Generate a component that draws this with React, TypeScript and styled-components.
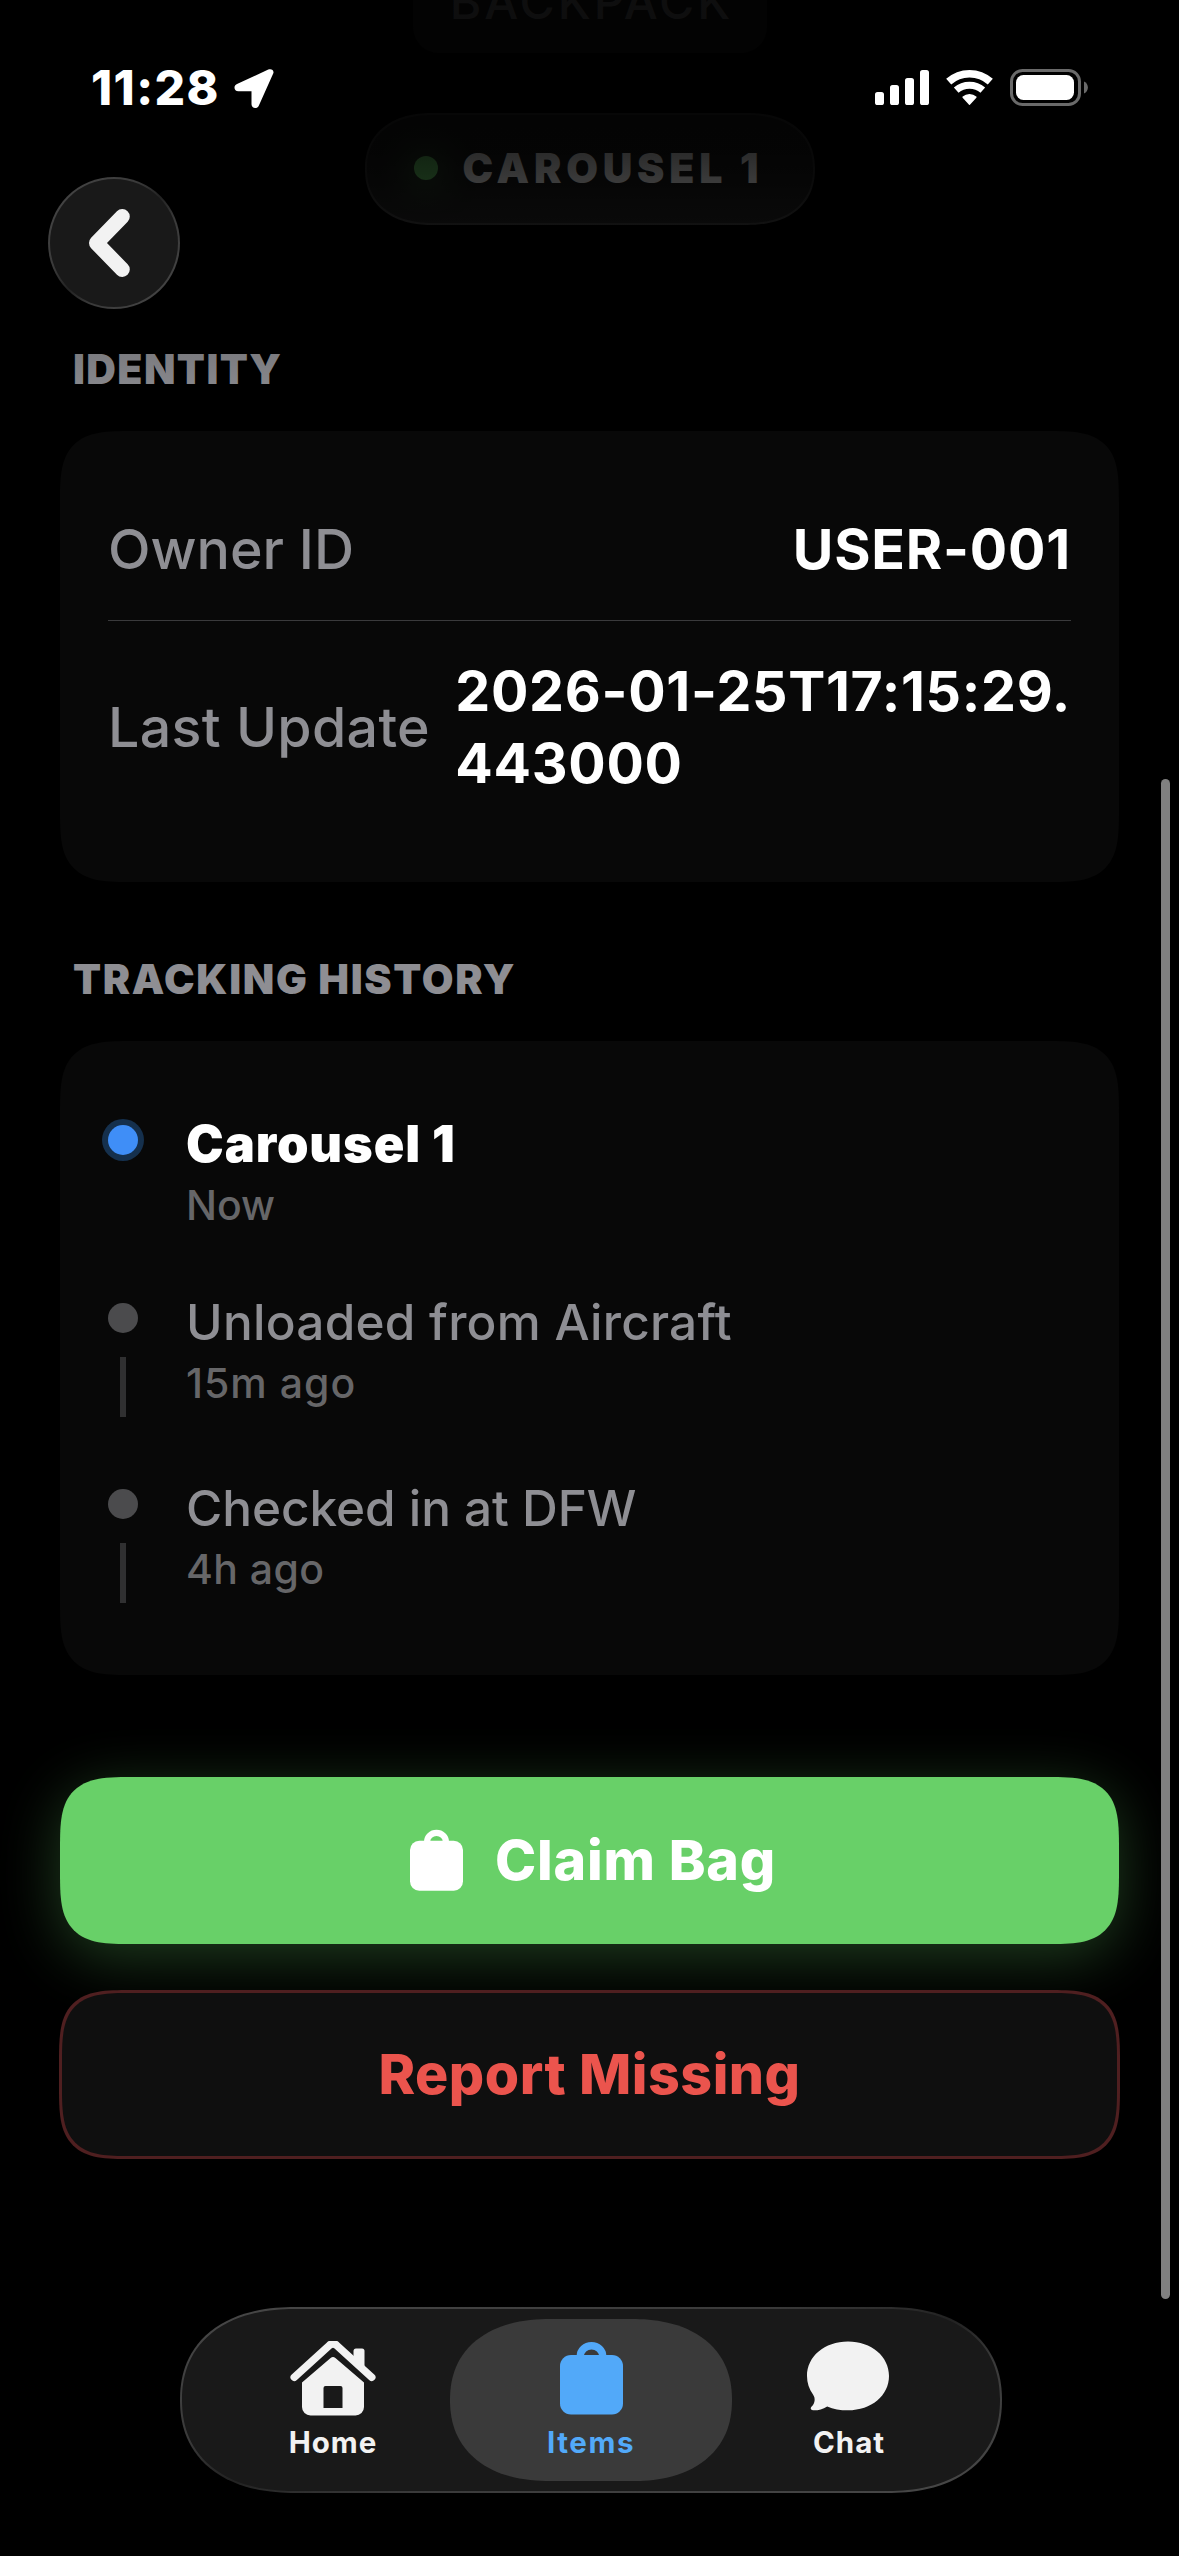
import React from "react";
import styled, { createGlobalStyle, css } from "styled-components";

const GlobalStyle = createGlobalStyle`
  *, *::before, *::after { box-sizing: border-box; }
  html, body { margin: 0; background: #000; }
  body { font-family: Inter, Roboto, "Liberation Sans", sans-serif; }
  button { font: inherit; color: inherit; }
`;

const smoothCorners = css`
  border-radius: 50px;
  @supports (corner-shape: superellipse(1.7)) {
    border-radius: 72px;
    corner-shape: superellipse(1.7);
  }
`;

const smoothPill = (rx: number, ry: number) => css`
  border-radius: ${ry}px;
  @supports (corner-shape: superellipse(1.18)) {
    border-radius: ${rx}px / ${ry}px;
    corner-shape: superellipse(1.18);
  }
`;

const Screen = styled.div`
  position: relative;
  width: 1179px;
  height: 2556px;
  overflow: hidden;
  background: #000;
`;

const ScrollContent = styled.main`
  display: flex;
  flex-direction: column;
  margin-top: -47px;
  padding: 0 60px;
`;

const TypeChip = styled.div`
  align-self: center;
  width: 354px;
  height: 100px;
  padding-left: 4px;
  border-radius: 26px;
  background: #1a1a1a;
  color: #8e8e93;
  font-size: 48px;
  font-weight: 500;
  line-height: 98px;
  text-align: center;
  letter-spacing: 3px;
`;

const LocationPill = styled.div`
  align-self: center;
  display: flex;
  align-items: center;
  gap: 25px;
  width: 450px;
  height: 112px;
  margin-top: 60px;
  padding: 0 0 2px 47px;
  background: #1a1a1a;
  border: 2px solid #2e2e2e;
  color: #fff;
  font-size: 41px;
  font-weight: 900;
  letter-spacing: 4.8px;
  white-space: nowrap;
  ${smoothPill(68, 56)}
`;

const LiveDot = styled.span`
  width: 24px;
  height: 24px;
  border-radius: 50%;
  background: #69d069;
  box-shadow: 0 0 36px rgba(105, 208, 105, 0.8);
`;

const SectionTitle = styled.h2<{ $gap: number; $spacing: number }>`
  margin: ${(p) => p.$gap}px 0 38px 13px;
  color: #8e8e93;
  font-size: 41px;
  font-weight: 900;
  line-height: 48px;
  letter-spacing: ${(p) => p.$spacing}px;
`;

const Card = styled.section`
  background: #080808;
  ${smoothCorners}
`;

const IdentityCard = styled(Card)`
  height: 451px;
  padding: 48px;
`;

const InfoRow = styled.div<{ $height: number; $divided?: boolean }>`
  display: flex;
  align-items: center;
  justify-content: space-between;
  height: ${(p) => p.$height}px;
  padding-bottom: 2px;
  border-bottom: ${(p) => (p.$divided ? "1px solid #3a3a3c" : "0")};
`;

const InfoLabel = styled.span<{ $spacing: number }>`
  color: #8e8e93;
  font-size: 55.5px;
  font-weight: 500;
  line-height: 72px;
  white-space: nowrap;
  letter-spacing: ${(p) => p.$spacing}px;
`;

const InfoValue = styled.span<{ $spacing: number }>`
  color: #fff;
  font-size: 55.5px;
  font-weight: 700;
  line-height: 72px;
  white-space: pre;
  letter-spacing: ${(p) => p.$spacing}px;
`;

const HistoryCard = styled(Card)`
  height: 634px;
  padding: 73px 48px 0;
`;

const Step = styled.div`
  display: flex;
  gap: 48px;
  padding-bottom: 61px;
`;

const Marker = styled.div`
  display: flex;
  flex-direction: column;
  align-items: center;
  gap: 24px;
  width: 30px;
  padding-top: 11px;
`;

const StepDot = styled.span<{ $active?: boolean }>`
  width: 30px;
  height: 30px;
  border-radius: 50%;
  background: ${(p) => (p.$active ? "#3f8ef7" : "#4b4b4d")};
  box-shadow: ${(p) => (p.$active ? "0 0 0 6px #15304d" : "none")};
`;

const StepLine = styled.span`
  width: 6px;
  height: 60px;
  background: #303031;
`;

const StepText = styled.div`
  display: flex;
  flex-direction: column;
  gap: 6px;
  height: 117px;
  white-space: nowrap;
`;

const StepTitle = styled.span<{ $active?: boolean; $spacing: number }>`
  color: ${(p) => (p.$active ? "#fff" : "#8e8e93")};
  font-size: ${(p) => (p.$active ? 50.5 : 49.5)}px;
  font-weight: ${(p) => (p.$active ? 900 : 500)};
  line-height: 60px;
  letter-spacing: ${(p) => p.$spacing}px;
`;

const StepTime = styled.span<{ $spacing: number }>`
  color: #666668;
  font-size: 41px;
  font-weight: 500;
  line-height: 50px;
  letter-spacing: ${(p) => p.$spacing}px;
`;

const ActionButton = styled.button`
  display: flex;
  align-items: center;
  justify-content: center;
  border: 0;
  font-size: 55.5px;
  font-weight: 800;
  white-space: nowrap;
  ${smoothCorners}
`;

const ClaimButton = styled(ActionButton)`
  gap: 32px;
  height: 167px;
  margin-top: 102px;
  padding: 0 0 0 7px;
  background: #68d068;
  color: #fff;
  letter-spacing: 0.8px;
  box-shadow: 0 12px 60px rgba(105, 208, 105, 0.3);
`;

const ClaimLabel = styled.span`
  padding-bottom: 3px;
`;

const ReportButton = styled(ActionButton)`
  height: 169px;
  margin: 46px -1px 0;
  padding: 0 0 2px;
  background: #0f0f0f;
  border: 3px solid #4f1f20;
  color: #eb544d;
  letter-spacing: 0.5px;
`;

const TopFade = styled.div`
  position: absolute;
  inset: 0 0 auto 0;
  height: 415px;
  background: linear-gradient(
    to bottom,
    rgba(0, 0, 0, 0.9) 0,
    rgba(0, 0, 0, 0.9) 20px,
    rgba(0, 0, 0, 0.83) 153px,
    rgba(0, 0, 0, 0.77) 183px,
    rgba(0, 0, 0, 0.62) 225px,
    rgba(0, 0, 0, 0.13) 355px,
    rgba(0, 0, 0, 0.06) 384px,
    rgba(0, 0, 0, 0) 415px
  );
`;

const StatusBar = styled.header`
  position: absolute;
  inset: 0 0 auto 0;
  display: flex;
  align-items: flex-start;
  justify-content: space-between;
  padding: 69px 91px 0;
  color: #fff;
`;

const StatusGroup = styled.div`
  display: flex;
  align-items: flex-start;
`;

const Clock = styled.span`
  width: 143px;
  font-size: 48px;
  font-weight: 800;
  line-height: 38px;
  letter-spacing: 1.4px;
`;

const StatusIcons = styled(StatusGroup)`
  gap: 17px;
`;

const glassBorder = css`
  border: 2px solid transparent;
  background: linear-gradient(#191919, #191919) padding-box,
    linear-gradient(to bottom right, #484848 0%, #3a3a3a 36%, #222 50%, #3a3a3a 64%, #484848 100%)
      border-box;
`;

const BackButton = styled.button`
  position: absolute;
  left: 48px;
  top: 177px;
  display: flex;
  align-items: center;
  justify-content: center;
  width: 132px;
  height: 132px;
  padding: 0 10px 0 0;
  border-radius: 50%;
  ${glassBorder}
`;

const ScrollThumb = styled.div`
  position: absolute;
  right: 9px;
  top: 779px;
  width: 9px;
  height: 1520px;
  border-radius: 5px;
  background: #808080;
`;

const TabBar = styled.nav`
  position: absolute;
  left: 180px;
  top: 2307px;
  display: flex;
  width: 822px;
  height: 186px;
  padding: 10px;
  ${glassBorder}
  ${smoothPill(115, 93)}
`;

const Tab = styled.a<{ $active?: boolean; $spacing: number }>`
  display: flex;
  flex-direction: column;
  align-items: center;
  width: 282px;
  height: 162px;
  margin-right: -24px;
  padding-top: 22px;
  background: ${(p) => (p.$active ? "#3a3a3a" : "transparent")};
  color: ${(p) => (p.$active ? "#52a9f9" : "#f2f2f2")};
  font-size: 29.5px;
  font-weight: 700;
  line-height: 36px;
  letter-spacing: ${(p) => p.$spacing}px;
  ${smoothPill(100, 81)}

  svg {
    flex: none;
    margin-bottom: 8px;
  }
`;

const LocationArrow = () => (
  <svg width="40" height="40" viewBox="0 0 40 40" fill="currentColor">
    <path d="M39.2 4.6 24.9 36.4c-1.8 4-7.4 3-7.4-1.2V22.2H4.4C0 22.2-1 16.900 3 15.1L34.300.6c3.200-1.400 6.200 1 4.900 4z" />
  </svg>
);

const SignalIcon = () => (
  <svg width="54" height="37" viewBox="0 0 54 37" fill="currentColor">
    <rect x="0" y="23" width="9" height="13" rx="2.600" />
    <rect x="15" y="16" width="9" height="20" rx="2.600" />
    <rect x="30" y="9" width="9" height="27" rx="2.600" />
    <rect x="45" y="1" width="9" height="35" rx="2.600" />
  </svg>
);

const WifiIcon = () => (
  <svg width="47" height="37" viewBox="0 0 47 37" fill="none" stroke="currentColor">
    <path d="M2.700 12.700A31.200 31.200 0 0 1 44.300 12.700" strokeWidth="7.600" />
    <path d="M10.200 21.200A20 20 0 0 1 36.800 21.200" strokeWidth="7" />
    <path d="M23.500 35 17.300 28.200A9.200 9.200 0 0 1 29.700 28.200Z" fill="currentColor" strokeWidth="1.800" strokeLinejoin="round" />
  </svg>
);

const BatteryIcon = () => (
  <svg width="78" height="37" viewBox="0 0 78 37">
    <rect x="1.500" y="1.500" width="68" height="34" rx="11" fill="none" stroke="#6a6a6a" strokeWidth="3" />
    <rect x="6" y="6" width="58" height="25" rx="7.500" fill="#fff" />
    <path d="M74 12.500c5.200 2 5.200 10 0 12z" fill="#6a6a6a" />
  </svg>
);

const ChevronLeft = () => (
  <svg width="42" height="68" viewBox="0 0 42 68" fill="none" stroke="#f2f2f2" strokeWidth="15" strokeLinecap="round" strokeLinejoin="round">
    <path d="M34.300 7.500 8.500 34l25.800 26.500" />
  </svg>
);

const BagIcon = ({ width, height }: { width: number; height: number }) => (
  <svg width={width} height={height} viewBox="0 -1 63 75" preserveAspectRatio="none" fill="currentColor">
    <rect x="0" y="13" width="63" height="59.500" rx="11" />
    <path d="M20.300 15v-.800a11.200 10.500 0 0 1 22.400 0v.800" fill="none" stroke="currentColor" strokeWidth="7.400" />
  </svg>
);

const HomeIcon = () => (
  <svg width="86" height="75" viewBox="0 0 86 75" fill="currentColor">
    <path d="M4.300 36.500 39.500 4.500Q43 1.600 46.500 4.500L81.700 36.500" transform="translate(0 -.3)" fill="none" stroke="currentColor" strokeWidth="7.600" strokeLinecap="round" strokeLinejoin="round" />
    <path d="M63.500 20V10a2.500 2.500 0 0 1 2.500-2.500h6A2.500 2.500 0 0 1 74.500 10V30z" />
    <path fillRule="evenodd" d="M40.600 17Q43 15 45.400 17L74 41.500V66a8.500 8.500 0 0 1-8.500 8.500h-45A8.500 8.500 0 0 1 12 66V41.500ZM35.500 45a2 2 0 0 0-2 2v20h19V47a2 2 0 0 0-2-2z" />
  </svg>
);

const ChatIcon = () => (
  <svg width="84" height="75" viewBox="0 0 84 75" fill="currentColor">
    <path d="M41 .500C64.500.500 82 15.500 82 35S64.500 69.300 41 69.300c-7.700 0-14.700-1.300-20.800-3.900-4.700 2.900-9.700 4.200-14.200 3.900-2.400-.2-2.900-2.100-1.300-3.700C8.300 62 8.500 57 6 53.500 2 48 0 42 0 35 0 15.500 17.500.500 41 .500Z" />
  </svg>
);

type HistoryStep = {
  title: string;
  time: string;
  active?: boolean;
  titleSpacing: number;
  timeSpacing: number;
};

const steps: HistoryStep[] = [
  { title: "Carousel 1", time: "Now", active: true, titleSpacing: 0.9, timeSpacing: 0 },
  { title: "Unloaded from Aircraft", time: "15m ago", titleSpacing: 0.25, timeSpacing: 1 },
  { title: "Checked in at DFW", time: "4h ago", titleSpacing: -0.05, timeSpacing: 0.4 },
];

export default function App() {
  return (
    <>
      <GlobalStyle />
      <Screen>
        <ScrollContent>
          <TypeChip>BACKPACK</TypeChip>
          <LocationPill>
            <LiveDot />
            CAROUSEL 1
          </LocationPill>

          <SectionTitle $gap={120} $spacing={1.4}>IDENTITY</SectionTitle>
          <IdentityCard>
            <InfoRow $height={142} $divided>
              <InfoLabel $spacing={0}>Owner ID</InfoLabel>
              <InfoValue $spacing={0.8}>USER-001</InfoValue>
            </InfoRow>
            <InfoRow $height={213}>
              <InfoLabel $spacing={0.3}>Last Update</InfoLabel>
              <InfoValue $spacing={0.7}>{"2026-01-25T17:15:29.\n443000"}</InfoValue>
            </InfoRow>
          </IdentityCard>

          <SectionTitle $gap={73} $spacing={1.65}>TRACKING HISTORY</SectionTitle>
          <HistoryCard>
            {steps.map((step) => (
              <Step key={step.title}>
                <Marker>
                  <StepDot $active={step.active} />
                  {!step.active && <StepLine />}
                </Marker>
                <StepText>
                  <StepTitle $active={step.active} $spacing={step.titleSpacing}>{step.title}</StepTitle>
                  <StepTime $spacing={step.timeSpacing}>{step.time}</StepTime>
                </StepText>
              </Step>
            ))}
          </HistoryCard>

          <ClaimButton>
            <BagIcon width={53} height={63} />
            <ClaimLabel>Claim Bag</ClaimLabel>
          </ClaimButton>
          <ReportButton>Report Missing</ReportButton>
        </ScrollContent>

        <TopFade />
        <ScrollThumb />

        <StatusBar>
          <StatusGroup>
            <Clock>11:28</Clock>
            <LocationArrow />
          </StatusGroup>
          <StatusIcons>
            <SignalIcon />
            <WifiIcon />
            <BatteryIcon />
          </StatusIcons>
        </StatusBar>

        <BackButton aria-label="Back">
          <ChevronLeft />
        </BackButton>

        <TabBar>
          <Tab $spacing={1}>
            <HomeIcon />
            Home
          </Tab>
          <Tab $active $spacing={1.6}>
            <BagIcon width={63} height={75} />
            Items
          </Tab>
          <Tab $spacing={1}>
            <ChatIcon />
            Chat
          </Tab>
        </TabBar>
      </Screen>
    </>
  );
}
